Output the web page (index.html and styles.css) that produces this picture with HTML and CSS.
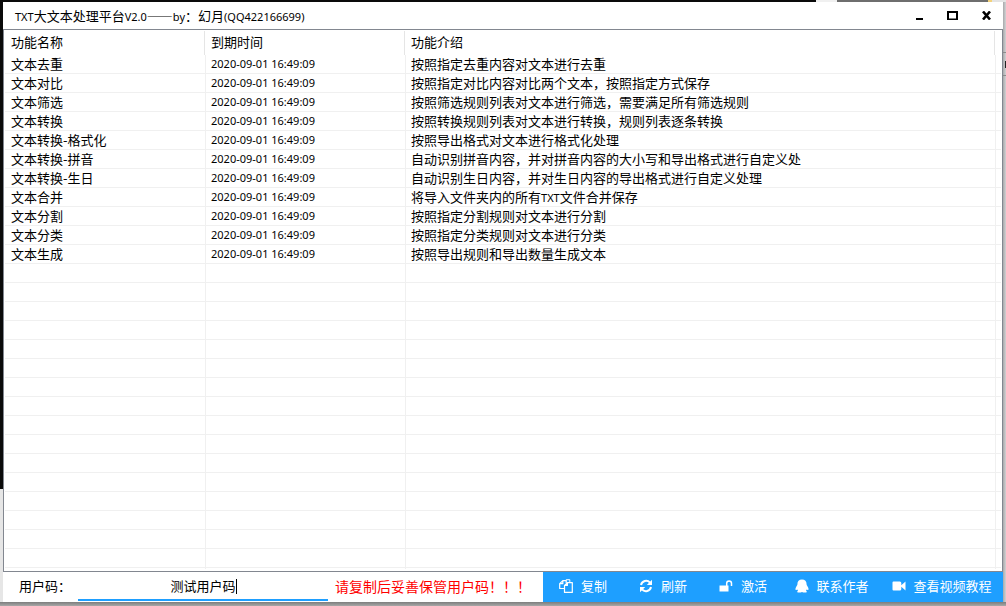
FILE: index.html
```html
<!DOCTYPE html>
<html lang="zh-CN">
<head>
<meta charset="utf-8">
<title>TXT大文本处理平台V2.0</title>
<link rel="stylesheet" href="styles.css">
</head>
<body>
<div class="backdrop-right"><i class="edge-panel"></i></div>
<main class="window">
  <header class="titlebar">
    <h1 class="title"><span class="latin">TXT</span>大文本处理平台<span class="latin">V2.0</span>——<span class="latin">by</span>：幻月<span class="latin">(QQ422166699)</span></h1>
    <button class="win-btn" type="button" aria-label="最小化"><svg width="11" height="9" viewBox="0 0 11 9"><path d="M2 7h7v2H2z"/></svg></button>
    <button class="win-btn" type="button" aria-label="最大化"><svg width="11" height="9" viewBox="0 0 11 9"><path fill-rule="evenodd" d="M0 0h11v9H0zM2 2v5.500h7V2z"/></svg></button>
    <button class="win-btn" type="button" aria-label="关闭"><svg width="11" height="9" viewBox="0 0 11 9"><path d="M2 0.500L9 8.500M9 0.500L2 8.500" stroke="#000" stroke-width="2.600"/></svg></button>
  </header>
  <section class="list">
    <table class="table">
      <colgroup><col class="col-name"><col class="col-time"><col><col class="col-end"></colgroup>
      <thead><tr><th>功能名称</th><th>到期时间</th><th>功能介绍</th><td></td></tr></thead>
      <tbody>
        <tr><td>文本去重</td><td class="time">2020-09-01 16:49:09</td><td>按照指定去重内容对文本进行去重</td><td></td></tr>
        <tr><td>文本对比</td><td class="time">2020-09-01 16:49:09</td><td>按照指定对比内容对比两个文本，按照指定方式保存</td><td></td></tr>
        <tr><td>文本筛选</td><td class="time">2020-09-01 16:49:09</td><td>按照筛选规则列表对文本进行筛选，需要满足所有筛选规则</td><td></td></tr>
        <tr><td>文本转换</td><td class="time">2020-09-01 16:49:09</td><td>按照转换规则列表对文本进行转换，规则列表逐条转换</td><td></td></tr>
        <tr><td>文本转换-格式化</td><td class="time">2020-09-01 16:49:09</td><td>按照导出格式对文本进行格式化处理</td><td></td></tr>
        <tr><td>文本转换-拼音</td><td class="time">2020-09-01 16:49:09</td><td>自动识别拼音内容，并对拼音内容的大小写和导出格式进行自定义处</td><td></td></tr>
        <tr><td>文本转换-生日</td><td class="time">2020-09-01 16:49:09</td><td>自动识别生日内容，并对生日内容的导出格式进行自定义处理</td><td></td></tr>
        <tr><td>文本合并</td><td class="time">2020-09-01 16:49:09</td><td>将导入文件夹内的所有<span class="latin">TXT</span>文件合并保存</td><td></td></tr>
        <tr><td>文本分割</td><td class="time">2020-09-01 16:49:09</td><td>按照指定分割规则对文本进行分割</td><td></td></tr>
        <tr><td>文本分类</td><td class="time">2020-09-01 16:49:09</td><td>按照指定分类规则对文本进行分类</td><td></td></tr>
        <tr><td>文本生成</td><td class="time">2020-09-01 16:49:09</td><td>按照导出规则和导出数量生成文本</td><td></td></tr>
      </tbody>
    </table>
    <div class="empty-rows"></div>
  </section>
  <footer class="footer">
    <label class="code-label" for="code">用户码：</label>
    <div class="code-field">
      <input class="code-input" id="code" type="text" value="测试用户码">
      <i class="caret"></i>
    </div>
    <p class="warning">请复制后妥善保管用户码！！！</p>
    <nav class="actions">
      <button class="action" type="button">
        <svg class="icon" viewBox="0 0 14 14" fill="none" stroke="#fff" stroke-width="1.200" stroke-linejoin="round"><path d="M5.500 9.500H.7V4.700L3.800 1.600h3.400v2.300M3.800 1.600v3.100H.7"/><path d="M5.500 6.500L8.400 3.600h4.900v9.800H5.500zM8.400 3.600v2.900H5.500"/><path d="M7.200 1.600V.7h3.600v2.900" stroke-width="1"/></svg>
        复制
      </button>
      <button class="action" type="button">
        <svg class="icon" viewBox="0 0 14 14"><path d="M2 6A5.200 5.200 0 0 1 11 3.600M12 8A5.200 5.200 0 0 1 3 10.400" fill="none" stroke="#fff" stroke-width="2"/><path d="M13 .8v5.200H7.800zM1 13.200V8h5.200z" fill="#fff"/></svg>
        刷新
      </button>
      <button class="action" type="button">
        <svg class="icon" viewBox="0 0 14 14"><path d="M.5 6.500h9V12.500h-9z" fill="#fff"/><path d="M7.700 7V4.300a2.400 2.400 0 0 1 4.800 0v2.700" fill="none" stroke="#fff" stroke-width="1.500"/></svg>
        激活
      </button>
      <button class="action action-wide" type="button">
        <svg class="icon" viewBox="0 0 14 14"><path d="M7 .5C4 .5 2.400 2.500 2.400 5.200c0 .9-.7 1.700-1.300 2.900C.4 9.500.2 11 .9 11.100c.4.100.8-.4 1.200-.9.200.7.500 1.100 1 1.500-.7.300-1 .7-.9 1.200.3.700 3.500.7 4.800 0 1.300.7 4.500.7 4.800 0 .1-.5-.2-.9-.9-1.200.5-.4.800-.8 1-1.500.4.500.8 1 1.200.9.700-.1.500-1.600-.2-3-.6-1.200-1.300-2-1.300-2.900C11.600 2.500 10 .5 7 .5z" fill="#fff"/></svg>
        联系作者
      </button>
      <button class="action action-wide" type="button">
        <svg class="icon" viewBox="0 0 14 14"><path d="M1.500 2.500h6.300a1.500 1.500 0 0 1 1.500 1.500v6a1.500 1.500 0 0 1-1.500 1.500H1.500A1 1 0 0 1 .5 10.500v-7a1 1 0 0 1 1-1zM9.300 6.200L13.500 2.500v9L9.300 7.800z" fill="#fff"/></svg>
        查看视频教程
      </button>
    </nav>
  </footer>
</main>
</body>
</html>
```
FILE: styles.css
```css
* {
  box-sizing: border-box;
}

body {
  margin: 0;
  min-height: 100vh;
  display: flex;
  padding: 2px 3px 4px;
  color: #000;
  font: 13px/18px "Noto Sans CJK SC", sans-serif;
  background:
    linear-gradient(#0a0a0a, #0a0a0a) 0 0 / 3px 489px no-repeat,
    linear-gradient(90deg, #0a0a0a 816px, #f0f0f0 816px, #f0f0f0 837px, #6e6e6e 837px, #6e6e6e 988px, #f3d27a 988px, #f3d27a 992px, #e4e4e4 992px) 0 0 / 100% 2px no-repeat,
    linear-gradient(#7d7d7d, #a8a8a8) 0 100% / 100% 4px no-repeat,
    #e6e6e6;
}

.backdrop-right {
  position: absolute;
  top: 2px;
  right: 0;
  bottom: 4px;
  width: 3px;
  background: linear-gradient(90deg, #a9a9ab, #d2d2d4);
}

.edge-panel {
  display: block;
  height: 24px;
  margin-top: 50px;
  border: solid #8c8c8c;
  border-width: 1px 0;
  background: linear-gradient(#222, #222) 100% 50% / 1px 7px no-repeat;
}

.window {
  flex: 1;
  min-width: 0;
  display: flex;
  flex-direction: column;
  background: #fff;
}

.titlebar {
  display: flex;
  align-items: center;
  height: 27px;
  padding: 0 6px 0 12px;
}

.title {
  flex: 1;
  margin: 0;
  font: inherit;
}

.win-btn {
  display: flex;
  align-items: center;
  justify-content: center;
  width: 33px;
  height: 27px;
  padding: 0;
  border: 0;
  background: none;
}

.win-btn:last-child {
  width: 22px;
  margin-left: 6px;
}

.list {
  flex: 1;
  display: flex;
  flex-direction: column;
  padding: 0 1px 2px;
  border: 1px solid #828790;
}

.table {
  width: 100%;
  table-layout: fixed;
  border-collapse: separate;
  border-spacing: 0;
}

.col-name {
  width: 201px;
}

.col-time {
  width: 200px;
}

.col-end {
  width: 5px;
}

th,
td {
  padding: 0 0 0 5px;
  font-weight: normal;
  text-align: left;
  white-space: nowrap;
}

th:first-child,
td:first-child {
  padding-left: 6px;
}

th {
  position: relative;
  height: 25px;
  padding-bottom: 2px;
}

th::after {
  content: "";
  position: absolute;
  top: 1px;
  right: 1px;
  bottom: 0;
  width: 1px;
  background: #e5e5e5;
}

tbody td {
  height: 19px;
  border: solid #f0f0f0;
  border-width: 0 1px 1px 0;
}

td:last-child {
  padding: 0;
  border-right: 0;
}

.time,
.latin {
  font-family: "Noto Sans", sans-serif;
  font-size: 11px;
}

.latin {
  line-height: 1;
}

.empty-rows {
  flex: 1;
  background:
    linear-gradient(#f0f0f0, #f0f0f0) 200px 0 / 1px 100% no-repeat,
    linear-gradient(#f0f0f0, #f0f0f0) 400px 0 / 1px 100% no-repeat,
    linear-gradient(#f0f0f0, #f0f0f0) calc(100% - 5px) 0 / 1px 100% no-repeat,
    repeating-linear-gradient(#fff 0 18px, #f0f0f0 18px 19px);
}

.footer {
  display: flex;
  align-items: stretch;
  height: 30px;
}

.code-label {
  width: 75px;
  padding: 5px 0 0 16px;
  white-space: nowrap;
}

.code-field {
  flex: 1;
  min-width: 0;
  display: flex;
  position: relative;
  padding-bottom: 1px;
}

.code-input {
  flex: 1;
  min-width: 0;
  padding: 0;
  border: 0;
  border-bottom: 2px solid #1e9fff;
  outline: 0;
  background: none;
  color: #000;
  font: inherit;
  text-align: center;
}

.caret {
  position: absolute;
  top: 7px;
  left: calc(50% + 33px);
  width: 1px;
  height: 15px;
  background: #000;
}

.warning {
  width: 215px;
  margin: 0;
  padding: 5px 0 0 7px;
  color: #f00;
  font-size: 14px;
  white-space: nowrap;
}

.actions {
  display: flex;
  width: 460px;
  background: #1e9fff;
}

.action {
  display: flex;
  align-items: center;
  justify-content: center;
  gap: 8px;
  padding: 0 16px 2px;
  border: 0;
  background: none;
  color: #fff;
  font: inherit;
  white-space: nowrap;
}

.action-wide {
  flex: 1 0 auto;
  padding: 0 11px 2px;
}

.icon {
  width: 14px;
  height: 14px;
}
```
